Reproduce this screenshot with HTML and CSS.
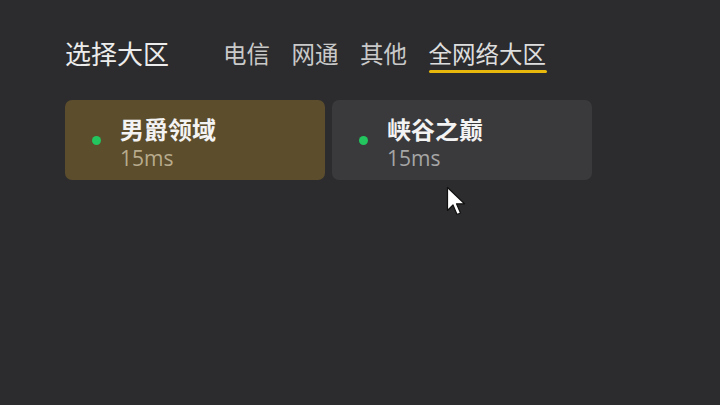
FILE: index.html
```html
<!DOCTYPE html>
<html lang="zh">
<head>
<meta charset="utf-8">
<link rel="stylesheet" href="styles.css">
</head>
<body>
<div class="page">
  <div class="header">
    <div class="title">选择大区</div>
    <div class="tabs">
      <div class="tab">电信</div>
      <div class="tab">网通</div>
      <div class="tab">其他</div>
      <div class="tab active">全网络大区</div>
    </div>
  </div>
  <div class="cards">
    <div class="card selected">
      <span class="dot"></span>
      <div class="info">
        <div class="name">男爵领域</div>
        <div class="ping">15ms</div>
      </div>
    </div>
    <div class="card">
      <span class="dot"></span>
      <div class="info">
        <div class="name">峡谷之巅</div>
        <div class="ping">15ms</div>
      </div>
    </div>
  </div>
</div>
<svg class="cursor" width="22" height="32" viewBox="0 0 22 32">
  <path d="M1.5 1.5 L1.5 24.5 L7 19 L11 28.5 L14.5 27 L10.5 17.8 L18.5 17.8 Z" fill="#ffffff" stroke="#111111" stroke-width="1.2" stroke-linejoin="round"/>
</svg>
</body>
</html>
```
FILE: styles.css
```css
html, body {
  margin: 0;
  padding: 0;
}
body {
  width: 720px;
  height: 405px;
  background: #2c2c2e;
  font-family: "Noto Sans CJK SC", "Noto Sans", sans-serif;
  overflow: hidden;
  position: relative;
}
.page {
  padding: 35px 0 0 65px;
}
.header {
  display: flex;
  align-items: flex-start;
  height: 65px;
}
.title {
  font-size: 26px;
  line-height: 36px;
  color: #ececec;
  width: 158px;
}
.tabs {
  display: flex;
  gap: 21.5px;
  padding-top: 2px;
}
.tab {
  font-size: 23.5px;
  line-height: 33px;
  color: #c9c9c9;
  position: relative;
}
.tab.active {
  color: #dedede;
}
.tab.active::after {
  content: "";
  position: absolute;
  left: 0;
  right: -1px;
  top: 33px;
  height: 3px;
  border-radius: 2px;
  background: #e8b80c;
}
.cards {
  display: flex;
  gap: 7px;
}
.card {
  width: 260px;
  height: 80px;
  border-radius: 7px;
  background: #3a3a3c;
  display: flex;
  align-items: center;
  box-sizing: border-box;
  padding-left: 27px;
}
.card.selected {
  background: #5c4d2d;
}
.dot {
  width: 9px;
  height: 9px;
  border-radius: 50%;
  background: #22c55e;
  margin-right: 19px;
}
.info {
  display: flex;
  flex-direction: column;
  margin-top: 6px;
}
.name {
  font-size: 24px;
  line-height: 28px;
  font-weight: 700;
  color: #f3f3f3;
}
.ping {
  font-size: 21px;
  line-height: 26px;
  margin-top: 2px;
  color: #a6a6a6;
  font-family: "Open Sans", "Noto Sans", sans-serif;
}
.card.selected .ping {
  color: #b8ab8c;
}
.cursor {
  position: absolute;
  left: 446px;
  top: 186px;
}
```
